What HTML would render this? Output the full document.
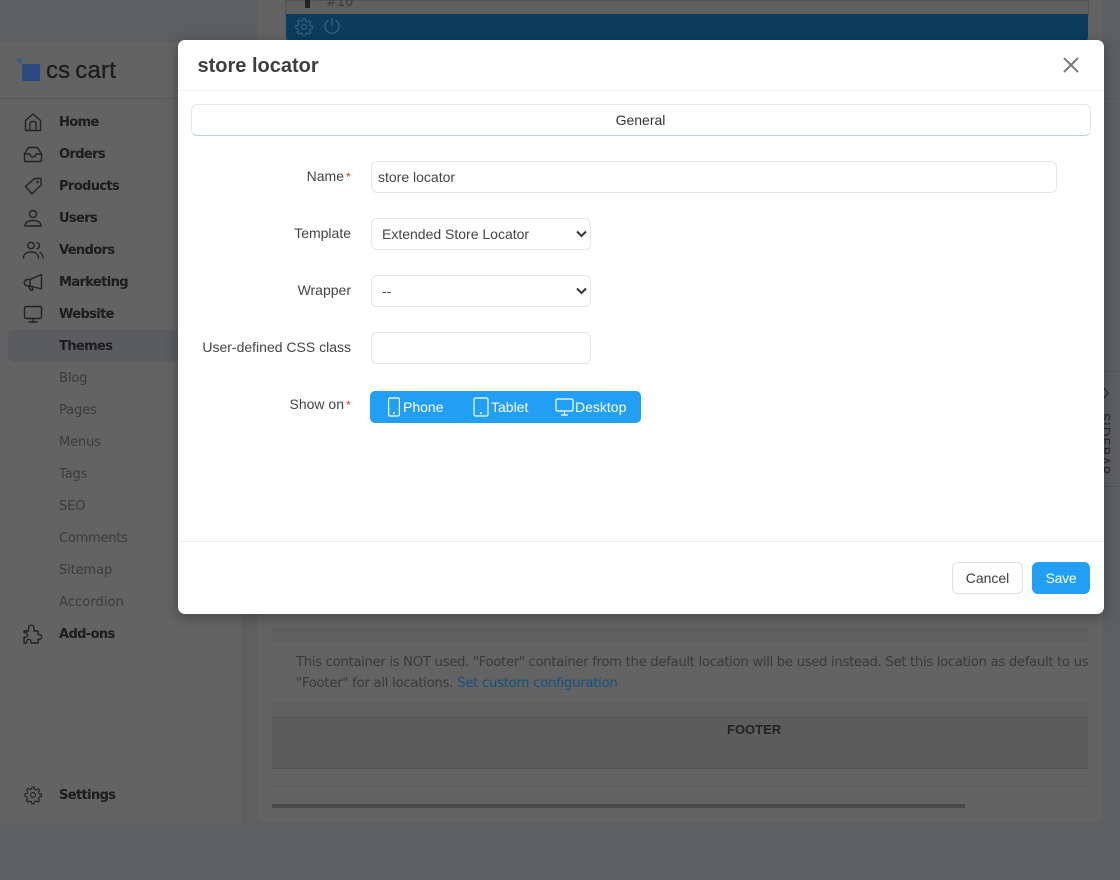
<!DOCTYPE html>
<html><head><meta charset="utf-8"><style>
*{box-sizing:border-box}
html,body{margin:0;padding:0;width:1120px;height:880px;overflow:hidden;background:#5c5e60;font-family:"Liberation Sans",sans-serif}
.a{position:absolute}
.nav{position:absolute;left:59px;font:bold 13px/18px "DejaVu Sans",sans-serif;color:#1c1c1e;white-space:nowrap;letter-spacing:-.62px}
.sub{position:absolute;left:59px;font:13px/18px "DejaVu Sans",sans-serif;color:#3a3b3d;white-space:nowrap;letter-spacing:-.1px}
.ic{position:absolute;left:22px;width:22px;height:22px;fill:none;stroke:#222325;stroke-width:1.400;stroke-linecap:round;stroke-linejoin:round}
.lb{position:absolute;right:769px;font-size:14px;line-height:18px;color:#444;white-space:nowrap}
.fld{position:absolute;left:371px;height:32px;border:1px solid #e3e5e8;border-radius:6px;background:#fff;font-size:14px;color:#444}
.txt{position:absolute;white-space:nowrap}
</style></head><body>
<div class="a" style="left:0;top:42px;width:242px;height:782px;background:#636363"></div>
<div class="a" style="left:0;top:98px;width:178px;height:1px;background:#585859"></div>
<div class="a" style="left:8px;top:330px;width:170px;height:32px;background:#5a5c60;border-radius:5px 0 0 5px"></div>
<div class="a" style="left:17px;top:58px;width:5px;height:5px;border-radius:50%;background:#33598f"></div>
<div class="a" style="left:22px;top:64px;width:18px;height:17px;border-radius:2px;background:#2a4980"></div>
<div class="txt" style="left:46px;top:57px;font-size:24px;line-height:28px;color:#1d1d1f;letter-spacing:.1px;-webkit-text-stroke:.3px #1d1d1f">cs<span style="margin-left:5px;letter-spacing:.25px">cart</span></div>

<svg class="ic" style="top:111px" viewBox="0 0 22 22"><path d="M3.500 19.500V9.500L11 3l7.500 6.500v10z"/><path d="M8 19.500v-7a2 2 0 0 1 2-2h2a2 2 0 0 1 2 2v7"/></svg>
<svg class="ic" style="top:143px" viewBox="0 0 22 22"><path d="M2.500 11l4-6.500h9l4 6.500v6.500a1 1 0 0 1-1 1h-15a1 1 0 0 1-1-1z"/><path d="M2.500 11h5.500a3 3 0 0 0 6 0h5.500"/></svg>
<svg class="ic" style="top:175px" viewBox="0 0 22 22"><path d="M3.500 11.500L12.500 3.500h6.500v6.500L10 19z"/><circle cx="15.500" cy="7" r=".5"/></svg>
<svg class="ic" style="top:207px" viewBox="0 0 22 22"><circle cx="11" cy="7" r="3.500"/><path d="M3 19c0-4 4-5.500 8-5.500s8 1.500 8 5.500z"/></svg>
<svg class="ic" style="top:239px" viewBox="0 0 22 22"><circle cx="9" cy="6.500" r="3.200"/><path d="M1.500 19c0-4 3-6 7.500-6s7.500 2 7.500 6"/><path d="M15 3.500a3.200 3.200 0 0 1 0 6.200M18 13.500c2 1 3 3 3 5.500"/></svg>
<svg class="ic" style="top:271px" viewBox="0 0 22 22"><path d="M19.500 3.500v14.500L8 15H5.500a3 3 0 0 1 0-6.500H8z"/><path d="M8 8.500V15M7 15l1.500 4H11l-1-3.500"/></svg>
<svg class="ic" style="top:303px" viewBox="0 0 22 22"><rect x="2.500" y="3.500" width="17" height="12" rx="1.500"/><path d="M11 15.500v3.500M7 19h8"/></svg>
<svg class="ic" style="top:623px" viewBox="0 0 22 22"><path d="M2 8h4.500V5a2.800 2.800 0 0 1 5.600 0v3h4v3.500h1a2.500 2.500 0 0 1 0 5h-1V20H9v-1.500a2.200 2.200 0 0 0-4.400 0V20H2v-5.500h1a2.500 2.500 0 0 0 0-5H2z"/></svg>
<svg class="ic" style="top:784px" viewBox="0 0 22 22"><g transform="translate(2.200 2.200) scale(.8)"><circle cx="11" cy="11" r="3"/><path d="M9.500 1h3l.5 2.800 2 .9 2.300-1.600 2.100 2.100-1.600 2.300.9 2 2.800.5v3l-2.800.5-.9 2 1.600 2.300-2.100 2.100-2.300-1.600-2 .9-.5 2.800h-3l-.5-2.800-2-.9-2.300 1.600-2.100-2.100 1.600-2.300-.9-2L1 12.500v-3l2.800-.5.900-2L3.100 4.700l2.100-2.100 2.300 1.600 2-.9z"/></g></svg>

<div class="nav" style="top:114px">Home</div>
<div class="nav" style="top:146px">Orders</div>
<div class="nav" style="top:178px">Products</div>
<div class="nav" style="top:210px">Users</div>
<div class="nav" style="top:242px">Vendors</div>
<div class="nav" style="top:274px">Marketing</div>
<div class="nav" style="top:306px">Website</div>
<div class="nav" style="top:338px">Themes</div>
<div class="sub" style="top:370px">Blog</div>
<div class="sub" style="top:402px">Pages</div>
<div class="sub" style="top:434px">Menus</div>
<div class="sub" style="top:466px">Tags</div>
<div class="sub" style="top:498px">SEO</div>
<div class="sub" style="top:530px;letter-spacing:-.2px">Comments</div>
<div class="sub" style="top:562px">Sitemap</div>
<div class="sub" style="top:594px;letter-spacing:.1px">Accordion</div>
<div class="nav" style="top:626px">Add-ons</div>
<div class="nav" style="top:787px">Settings</div>

<div class="a" style="left:257px;top:-10px;width:847px;height:833px;background:#636363;border:1px solid #5d5e5f;border-radius:6px;overflow:hidden"></div>
<div class="a" style="left:1104px;top:371px;width:16px;height:1px;background:#555657"></div>
<div class="a" style="left:1104px;top:486px;width:16px;height:1px;background:#555657"></div>
<div class="txt" style="left:1092px;top:413px;writing-mode:vertical-rl;font:13px/22px 'DejaVu Sans',sans-serif;color:#2c2c2e;letter-spacing:.8px">SIDEBAR</div>
<svg class="a" style="left:1104px;top:386px;width:6px;height:15px;fill:none;stroke:#2c2c2e;stroke-width:1.200" viewBox="0 0 6 15"><path d="M0 2l4 5-4 5"/></svg>
<div class="a" style="left:1104px;top:98px;width:16px;height:1px;background:#575859"></div>
<div class="a" style="left:285px;top:0;width:804px;height:15px;background:#5f5f5f;border:1px solid #525252"></div>
<div class="a" style="left:305px;top:0;width:5px;height:8px;background:#222"></div>
<div class="txt" style="left:326px;top:-5px;font:13px/16px 'DejaVu Sans',sans-serif;color:#3a3a3a">#10</div>
<div class="a" style="left:286px;top:14px;width:802px;height:27px;background:#0c3c5c;border-radius:0 0 4px 4px"></div>
<svg class="a" style="left:295px;top:18px;width:18px;height:18px;fill:none;stroke:#356281;stroke-width:1.300" viewBox="0 0 22 22"><circle cx="11" cy="11" r="3"/><path d="M9.500 1h3l.5 2.800 2 .9 2.300-1.600 2.100 2.100-1.600 2.300.9 2 2.800.5v3l-2.800.5-.9 2 1.600 2.300-2.100 2.100-2.300-1.600-2 .9-.5 2.800h-3l-.5-2.800-2-.9-2.300 1.600-2.100-2.100 1.600-2.300-.9-2L1 12.500v-3l2.800-.5.900-2L3.100 4.700l2.100-2.100 2.300 1.600 2-.9z"/></svg>
<svg class="a" style="left:323px;top:17px;width:18px;height:18px;fill:none;stroke:#356281;stroke-width:1.300;stroke-linecap:round" viewBox="0 0 18 18"><path d="M9 1.500v7M5 3.500a7 7 0 1 0 8 0"/></svg>

<div class="a" style="left:272px;top:628px;width:816px;height:14px;background:#5f5f5f"></div>
<div class="a" style="left:272px;top:642px;width:816px;height:75px;background:#636363"></div>
<div class="txt" style="left:296px;top:652px;width:792px;overflow:hidden;font:13.300px/21px 'DejaVu Sans',sans-serif;color:#3a3a3a;letter-spacing:-.29px"><span style="letter-spacing:-.35px">This container is NOT used. "Footer" container from the default location will be used instead. Set this location as default to use</span><br>"Footer" for all locations. <span style="color:#12527d">Set custom configuration</span></div>
<div class="a" style="left:272px;top:702px;width:816px;height:15px;background:#5f5f5f"></div>
<div class="a" style="left:272px;top:717px;width:816px;height:52px;background:#5c5c5c;border-top:1px solid #555;border-bottom:1px solid #555"></div>
<div class="txt" style="left:727px;top:722px;font-weight:bold;font-size:13px;line-height:16px;color:#222">FOOTER</div>
<div class="a" style="left:272px;top:786px;width:816px;height:1px;background:#5a5a5a"></div>
<div class="a" style="left:272px;top:804px;width:693px;height:4px;background:#4a4a4a"></div>

<div class="a" style="left:178px;top:40px;width:926px;height:574px;background:#fff;border-radius:7px;box-shadow:0 3px 12px rgba(0,0,0,.3)"></div>
<div class="txt" style="left:197.500px;top:53px;font-weight:bold;font-size:20px;line-height:26px;color:#3d3d3f">store locator</div>
<svg class="a" style="left:1062px;top:56px;width:18px;height:18px;fill:none;stroke:#7b7b7b;stroke-width:2" viewBox="0 0 18 18"><path d="M2 2l14 14M16 2L2 16"/></svg>
<div class="a" style="left:178px;top:90px;width:926px;height:1px;background:#eef0f2"></div>
<div class="a" style="left:191px;top:104px;width:900px;height:32px;border:1px solid #e3e6ea;border-bottom:1px solid #bcd0dc;border-radius:6px;background:#fff;text-align:center;font-size:14px;line-height:30px;color:#333;padding-right:1px">General</div>

<div class="lb" style="top:167px;right:776px">Name</div><div class="txt" style="left:346px;top:168px;font-size:12px;line-height:18px;color:#e0323c">*</div>
<div class="fld" style="top:161px;width:686px;padding:0 6px;line-height:30px">store locator</div>
<div class="lb" style="top:224px">Template</div>
<div class="fld" style="top:218px;width:220px;padding:0 10px;line-height:30px">Extended Store Locator<svg class="a" style="right:3px;top:11px;width:11px;height:8px;fill:none;stroke:#333;stroke-width:2" viewBox="0 0 11 8"><path d="M1 1.500l4.500 4.500L10 1.500"/></svg></div>
<div class="lb" style="top:281px">Wrapper</div>
<div class="fld" style="top:275px;width:220px;padding:0 10px;line-height:30px">--<svg class="a" style="right:3px;top:11px;width:11px;height:8px;fill:none;stroke:#333;stroke-width:2" viewBox="0 0 11 8"><path d="M1 1.500l4.500 4.500L10 1.500"/></svg></div>
<div class="lb" style="top:338px">User-defined CSS class</div>
<div class="fld" style="top:332px;width:220px"></div>
<div class="lb" style="top:395px;right:776px">Show on</div><div class="txt" style="left:346px;top:396px;font-size:12px;line-height:18px;color:#e0323c">*</div>

<div class="a" style="left:370px;top:391px;width:271px;height:32px;background:#219ff4;border-radius:5px"></div>
<svg class="a" style="left:387px;top:397px;width:14px;height:21px;fill:none;stroke:#fff;stroke-width:1.200" viewBox="0 0 14 21"><rect x="1.600" y="1" width="10.800" height="18" rx="1.500"/><circle cx="7" cy="16" r=".4"/></svg>
<div class="txt" style="left:403px;top:398px;font-size:14px;line-height:18px;color:#fff">Phone</div>
<svg class="a" style="left:473px;top:397px;width:16px;height:21px;fill:none;stroke:#fff;stroke-width:1.200" viewBox="0 0 16 21"><rect x="1" y="1" width="14" height="18" rx="1.500"/><circle cx="8" cy="16" r=".4"/></svg>
<div class="txt" style="left:491px;top:398px;font-size:14px;line-height:18px;color:#fff">Tablet</div>
<svg class="a" style="left:555px;top:397px;width:20px;height:20px;fill:none;stroke:#fff;stroke-width:1.200" viewBox="0 0 20 20"><rect x="1" y="2" width="17" height="12" rx="1.500"/><path d="M9.500 14v3M6 18h7"/></svg>
<div class="txt" style="left:575px;top:398px;font-size:14px;line-height:18px;color:#fff">Desktop</div>

<div class="a" style="left:178px;top:541px;width:926px;height:1px;background:#eceef0"></div>
<div class="a" style="left:952px;top:562px;width:71px;height:32px;border:1px solid #dde1e6;border-radius:6px;background:#fff;text-align:center;font-size:14px;line-height:30px;color:#3d3d3f">Cancel</div>
<div class="a" style="left:1032px;top:562px;width:58px;height:32px;border-radius:6px;background:#219ff4;text-align:center;font-size:14px;line-height:32px;color:#fff;letter-spacing:-.3px">Save</div>
</body></html>
